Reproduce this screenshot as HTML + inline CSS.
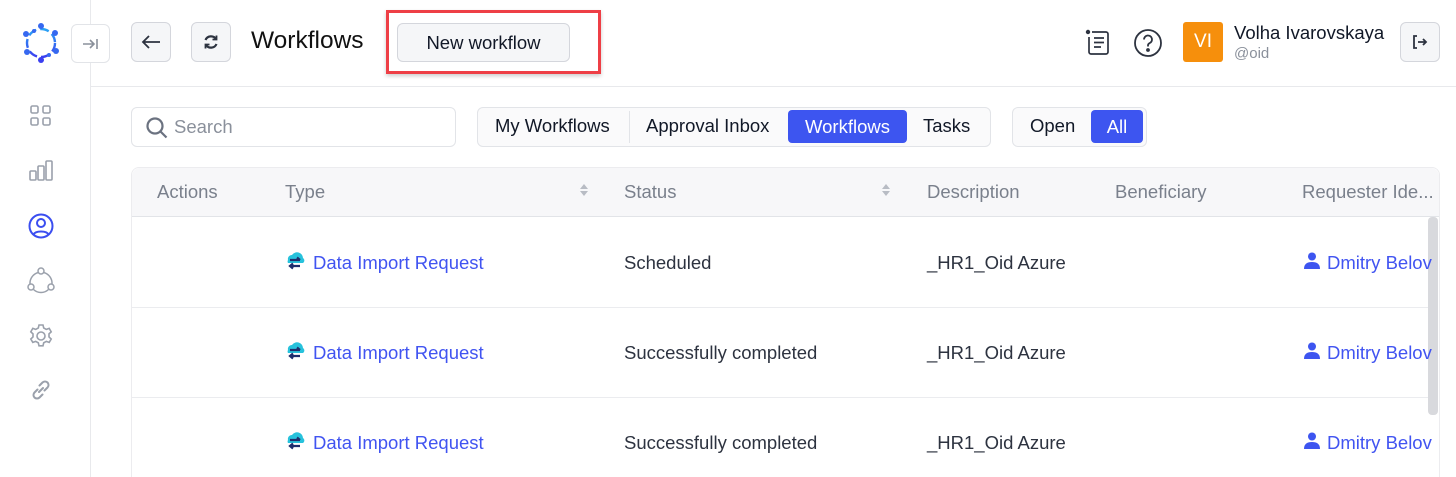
<!DOCTYPE html>
<html style="height:477px;overflow:hidden"><head><meta charset="utf-8"><style>
*{box-sizing:border-box;margin:0;padding:0}
body{width:1456px;height:477px;overflow:hidden;background:#fff;font-family:"Liberation Sans",sans-serif;color:#111827;position:relative}
.a{position:absolute}
.btn{position:absolute;border:1px solid #d4d6dc;border-radius:6px;background:#f5f6f8;display:flex;align-items:center;justify-content:center}
.side{left:90px;top:0;width:1px;height:477px;background:#e8e9ec}
.hd{left:91px;top:86px;right:0;height:1px;background:#e8e9ec}
.th{position:absolute;top:181px;font-size:18.5px;color:#7a808c}
.cell{position:absolute;font-size:18.5px;color:#2d3340}
.lnk{color:#4154f1}
.rowb{position:absolute;left:132px;width:1306px;height:1px;background:#ebecef}
.t{position:absolute;font-size:18.5px}
</style></head><body>
<div class="a side"></div><div class="a hd"></div>
<svg class="a" style="left:21px;top:22px" width="40" height="42" viewBox="0 0 40 42">
<defs><linearGradient id="g" x1="0" y1="0" x2="0" y2="1"><stop offset="0" stop-color="#2aa5f5"/><stop offset="1" stop-color="#3b3ff0"/></linearGradient></defs>
<circle cx="20" cy="21" r="14" fill="none" stroke="url(#g)" stroke-width="2.4" stroke-dasharray="9 4"/>
<g fill="#3668f0"><circle cx="20" cy="4" r="3"/><circle cx="34" cy="11" r="3"/><circle cx="35" cy="29" r="3"/><circle cx="20" cy="38" r="3" fill="#3b3ff0"/><circle cx="6" cy="30" r="3"/><circle cx="5" cy="12" r="3"/><circle cx="13" cy="9" r="2"/><circle cx="28" cy="33" r="2"/></g>
</svg>
<div class="btn" style="left:71px;top:24px;width:39px;height:39px;background:#fff;border-color:#e2e4e8"><svg width="18" height="14" viewBox="0 0 18 14" fill="none" stroke="#8a909b" stroke-width="1.6"><path d="M1 7h11M8 3l4 4-4 4M15 2v10"/></svg></div>
<svg class="a" style="left:29px;top:104px" width="24" height="24" fill="none" stroke="#9aa0ab" stroke-width="1.6"><rect x="2" y="2" width="7" height="7" rx="1.5"/><rect x="14" y="2" width="7" height="7" rx="1.5"/><rect x="2" y="14" width="7" height="7" rx="1.5"/><rect x="14" y="14" width="7" height="7" rx="1.5"/></svg>
<svg class="a" style="left:28px;top:158px" width="26" height="24" fill="none" stroke="#9aa0ab" stroke-width="1.6"><rect x="2" y="13" width="6" height="9" rx="1"/><rect x="10" y="8" width="6" height="14" rx="1"/><rect x="18" y="3" width="6" height="19" rx="1"/></svg>
<svg class="a" style="left:28px;top:213px" width="26" height="26" fill="none" stroke="#3b4ef0" stroke-width="2"><circle cx="13" cy="13" r="11.5"/><circle cx="13" cy="10" r="4"/><path d="M5.5 21.5c2-4 13-4 15 0"/></svg>
<svg class="a" style="left:27px;top:267px" width="28" height="28" fill="none" stroke="#9aa0ab" stroke-width="1.5"><circle cx="14" cy="4" r="3"/><circle cx="4" cy="20" r="3"/><circle cx="24" cy="20" r="3"/><path d="M11.5 5.5A11 11 0 0 0 3 17M16.5 5.5A11 11 0 0 1 25 17M6.5 22.5a11 11 0 0 0 15 0"/></svg>
<svg class="a" style="left:28px;top:323px" width="26" height="26" fill="none" stroke="#9aa0ab" stroke-width="1.6"><circle cx="13" cy="13" r="4"/><path d="M11 2h4l.7 3 2.6 1.4 2.9-1 2 3.4-2.2 2.1v3l2.2 2.1-2 3.4-2.9-1-2.6 1.4-.7 3h-4l-.7-3-2.6-1.4-2.9 1-2-3.4 2.2-2.1v-3L2.8 8.8l2-3.4 2.9 1L10.3 5z"/></svg>
<svg class="a" style="left:29px;top:378px" width="24" height="24" fill="none" stroke="#9aa0ab" stroke-width="2" stroke-linecap="round"><path d="M10 14l4-4M8.5 11.5l-3 3a3.5 3.5 0 0 0 5 5l3-3M15.5 12.5l3-3a3.5 3.5 0 0 0-5-5l-3 3"/></svg>
<div class="btn" style="left:131px;top:22px;width:40px;height:40px"><svg width="20" height="16" fill="none" stroke="#2d3340" stroke-width="1.8"><path d="M19 8H2M8 2L2 8l6 6"/></svg></div>
<div class="btn" style="left:191px;top:22px;width:40px;height:40px"><svg width="16" height="16" fill="none" stroke="#2d3340" stroke-width="2.2"><path d="M2.5 6A6 6 0 0 1 13 5M13.5 10A6 6 0 0 1 3 11"/><path d="M13.5 1.5v4h-4M2.5 14.5v-4h4" stroke-width="1.8"/></svg></div>
<div class="a" style="left:251px;top:27px;font-size:24.5px;color:#111">Workflows</div>
<div class="btn" style="left:397px;top:23px;width:173px;height:39px;font-size:18.5px;color:#111827">New workflow</div>
<div class="a" style="left:386px;top:10px;width:215px;height:64px;border:3px solid #ee3f46;box-shadow:0 2px 4px rgba(0,0,0,.2)"></div>
<svg class="a" style="left:1085px;top:29px" width="26" height="27" fill="none" stroke="#2d3340" stroke-width="1.7"><circle cx="3" cy="3" r="2.2" fill="#2d3340" stroke="none"/><path d="M7 3h14a2 2 0 0 1 2 2v18a2 2 0 0 1-2 2H6a2 2 0 0 1-2-2V8M9 9h10M9 13.5h10M9 18h7"/></svg>
<svg class="a" style="left:1133px;top:28px" width="30" height="30" fill="none" stroke="#2d3340" stroke-width="1.8"><circle cx="15" cy="15" r="13"/><path d="M11 11.5a4 4 0 1 1 5.5 3.7c-1 .5-1.5 1.2-1.5 2.3v1"/><circle cx="15" cy="22" r="1" fill="#2d3340"/></svg>
<div class="a" style="left:1183px;top:22px;width:40px;height:40px;background:#f68f0c;border-radius:3px;color:#fff;font-size:19px;display:flex;align-items:center;justify-content:center">VI</div>
<div class="a" style="left:1234px;top:22px;font-size:18.5px;color:#111827">Volha Ivarovskaya</div>
<div class="a" style="left:1234px;top:45px;font-size:15px;color:#8a909b">@oid</div>
<div class="btn" style="left:1400px;top:22px;width:40px;height:40px"><svg width="16" height="16" fill="none" stroke="#2d3340" stroke-width="1.8"><path d="M5 2H2v12h3"/><path d="M6 8h8M11 5l3 3-3 3"/></svg></div>
<div class="a" style="left:131px;top:107px;width:325px;height:40px;border:1px solid #e2e4e8;border-radius:6px"></div>
<svg class="a" style="left:145px;top:116px" width="24" height="24" fill="none" stroke="#6b7280" stroke-width="2.2"><circle cx="10" cy="10" r="7.5"/><path d="M15.5 15.5l6 6"/></svg>
<div class="a" style="left:174px;top:116px;font-size:18.5px;color:#8a909b">Search</div>
<div class="a" style="left:477px;top:107px;width:514px;height:40px;border:1px solid #e2e4e8;border-radius:6px;background:#fafafb"></div>
<div class="a" style="left:629px;top:111px;width:1px;height:32px;background:#e2e4e8"></div>
<div class="t" style="left:495px;top:115px">My Workflows</div>
<div class="t" style="left:646px;top:115px">Approval Inbox</div>
<div class="a" style="left:788px;top:110px;width:119px;height:33px;background:#3d55f0;border-radius:4px;color:#fff;font-size:18.5px;display:flex;align-items:center;justify-content:center">Workflows</div>
<div class="t" style="left:923px;top:115px">Tasks</div>
<div class="a" style="left:1012px;top:107px;width:135px;height:40px;border:1px solid #e2e4e8;border-radius:6px;background:#fafafb"></div>
<div class="t" style="left:1030px;top:115px">Open</div>
<div class="a" style="left:1091px;top:110px;width:52px;height:33px;background:#3d55f0;border-radius:4px;color:#fff;font-size:18.5px;display:flex;align-items:center;justify-content:center">All</div>
<div class="a" style="left:131px;top:167px;width:1309px;height:310px;border:1px solid #ececef;border-bottom:none;border-radius:8px 8px 0 0"></div>
<div class="a" style="left:132px;top:168px;width:1307px;height:49px;background:#f7f7f9;border-radius:8px 8px 0 0;border-bottom:1px solid #e2e4e8"></div>
<div class="th" style="left:157px">Actions</div>
<div class="th" style="left:285px">Type</div>
<div class="th" style="left:624px">Status</div>
<div class="th" style="left:927px">Description</div>
<div class="th" style="left:1115px">Beneficiary</div>
<div class="th" style="left:1302px">Requester Ide...</div>
<svg class="a" style="left:579px;top:183px" width="10" height="14" fill="#b8bcc4"><path d="M5 1l4 5H1zM5 13l4-5H1z"/></svg>
<svg class="a" style="left:881px;top:183px" width="10" height="14" fill="#b8bcc4"><path d="M5 1l4 5H1zM5 13l4-5H1z"/></svg>
<div class="rowb" style="top:307px"></div><div class="rowb" style="top:397px"></div>
<div class="a" style="left:1428px;top:217px;width:10px;height:198px;background:#d8d9dd;border-radius:4px"></div>
<svg class="a" style="left:284px;top:251px" width="22" height="20"><path d="M4 9a4 4 0 0 1 4-5 6 6 0 0 1 11 3 3 3 0 0 1 0 5H4a3 3 0 0 1 0-3z" fill="#27c2dc"/><path d="M6 9h10M13 6.5l3 2.5M16 15H6M9 12.5L6 15l3 2.5" stroke="#1e2d6b" stroke-width="2.2" fill="none"/></svg>
<div class="cell lnk" style="left:313px;top:252px">Data Import Request</div>
<div class="cell" style="left:624px;top:252px">Scheduled</div>
<div class="cell" style="left:927px;top:252px">_HR1_Oid Azure</div>
<svg class="a" style="left:1304px;top:252px" width="16" height="17" fill="#3d55f0"><circle cx="8" cy="4.5" r="4"/><path d="M0 17c0-5 3-7 8-7s8 2 8 7z"/></svg>
<div class="cell lnk" style="left:1327px;top:252px">Dmitry Belov</div>
<svg class="a" style="left:284px;top:341px" width="22" height="20"><path d="M4 9a4 4 0 0 1 4-5 6 6 0 0 1 11 3 3 3 0 0 1 0 5H4a3 3 0 0 1 0-3z" fill="#27c2dc"/><path d="M6 9h10M13 6.5l3 2.5M16 15H6M9 12.5L6 15l3 2.5" stroke="#1e2d6b" stroke-width="2.2" fill="none"/></svg>
<div class="cell lnk" style="left:313px;top:342px">Data Import Request</div>
<div class="cell" style="left:624px;top:342px">Successfully completed</div>
<div class="cell" style="left:927px;top:342px">_HR1_Oid Azure</div>
<svg class="a" style="left:1304px;top:342px" width="16" height="17" fill="#3d55f0"><circle cx="8" cy="4.5" r="4"/><path d="M0 17c0-5 3-7 8-7s8 2 8 7z"/></svg>
<div class="cell lnk" style="left:1327px;top:342px">Dmitry Belov</div>
<svg class="a" style="left:284px;top:431px" width="22" height="20"><path d="M4 9a4 4 0 0 1 4-5 6 6 0 0 1 11 3 3 3 0 0 1 0 5H4a3 3 0 0 1 0-3z" fill="#27c2dc"/><path d="M6 9h10M13 6.5l3 2.5M16 15H6M9 12.5L6 15l3 2.5" stroke="#1e2d6b" stroke-width="2.2" fill="none"/></svg>
<div class="cell lnk" style="left:313px;top:432px">Data Import Request</div>
<div class="cell" style="left:624px;top:432px">Successfully completed</div>
<div class="cell" style="left:927px;top:432px">_HR1_Oid Azure</div>
<svg class="a" style="left:1304px;top:432px" width="16" height="17" fill="#3d55f0"><circle cx="8" cy="4.5" r="4"/><path d="M0 17c0-5 3-7 8-7s8 2 8 7z"/></svg>
<div class="cell lnk" style="left:1327px;top:432px">Dmitry Belov</div>
</body></html>
